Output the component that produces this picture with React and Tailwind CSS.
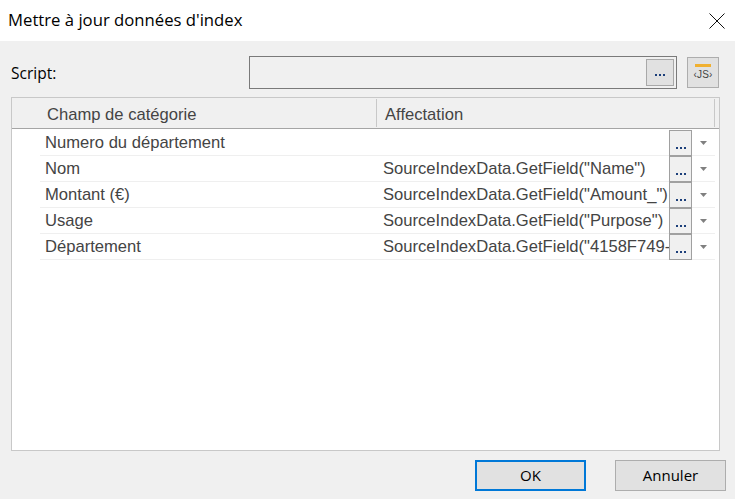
import React from 'react';

const rows = [
  { name: 'Numero du département', value: '' },
  { name: 'Nom', value: 'SourceIndexData.GetField("Name")' },
  { name: 'Montant (€)', value: 'SourceIndexData.GetField("Amount_")' },
  { name: 'Usage', value: 'SourceIndexData.GetField("Purpose")' },
  { name: 'Département', value: 'SourceIndexData.GetField("4158F749-' },
];

function Dots({ className }) {
  return (
    <span className={`flex gap-[2px] ${className}`}>
      <i className="w-[2px] h-[2px] bg-[#1c3f7a]" />
      <i className="w-[2px] h-[2px] bg-[#1c3f7a]" />
      <i className="w-[2px] h-[2px] bg-[#1c3f7a]" />
    </span>
  );
}

function Row({ row }) {
  return (
    <div className="flex h-[26px] ml-[28px] mr-[4px] border-b border-[#efefef] text-[16.6px] text-[#444] font-['Liberation_Sans',sans-serif]">
      <div className="w-[337px] pl-[5px] leading-[26px] shrink-0 whitespace-nowrap">{row.name}</div>
      <div className="w-[292px] pl-[6px] leading-[26px] shrink-0 whitespace-nowrap">{row.value}</div>
      <div className="w-[23px] h-[26px] shrink-0 border border-[#a0a0a0] bg-[#f0f0f0] flex items-end justify-center pb-[6px]">
        <Dots />
      </div>
      <div className="flex-1 flex items-center justify-center">
        <svg width="7" height="4" viewBox="0 0 7 4"><path d="M0 0h7L3.5 4z" fill="#808080" /></svg>
      </div>
    </div>
  );
}

export default function App() {
  return (
    <div className="w-[735px] h-[499px] bg-[#f0f0f0] flex flex-col overflow-hidden font-['Open_Sans',sans-serif] text-black">
      <div className="h-[41px] bg-white flex items-center justify-between pl-[8px] pr-[10px] shrink-0">
        <span className="text-[16.7px] whitespace-nowrap pb-[2px]">Mettre à jour données d'index</span>
        <svg width="16" height="16" viewBox="0 0 16 16"><path d="M0.5 0.5L15.5 15.5M15.5 0.5L0.5 15.5" stroke="#111" strokeWidth="1" fill="none" /></svg>
      </div>

      <div className="h-[33px] mt-[15px] flex items-center pl-[11px] pr-[16px] shrink-0">
        <span className="w-[238px] text-[15.5px] pt-[2px]">Script:</span>
        <div className="w-[428px] h-[33px] border border-[#7a7a7a] bg-[#f0f0f0] flex items-center justify-end pr-[2px]">
          <div className="w-[28px] h-[27px] border-[1.5px] border-[#a8a8a8] bg-[#e1e1e1] flex items-end justify-center pb-[9px]">
            <Dots />
          </div>
        </div>
        <div className="w-[32px] h-[31px] ml-[10px] border border-[#adadad] bg-[#e1e1e1] flex flex-col items-center pt-[6px]">
          <div className="w-[16px] h-[3px] bg-[#f0b030]" />
          <span className="font-['Liberation_Sans',sans-serif] text-[10px] leading-[15px] text-[#444] tracking-[0.2px]">‹JS›</span>
        </div>
      </div>

      <div className="mt-[8px] mx-[11px] w-[709px] h-[354px] border border-[#c8c8c8] bg-white shrink-0">
        <div className="h-[31px] bg-[#f0f0f0] border-b border-[#a5a5a5] flex text-[16.6px] text-[#444] font-['Liberation_Sans',sans-serif]">
          <div className="w-[365px] pl-[35px] border-r border-[#c8c8c8] my-[1px] leading-[32px] overflow-hidden">Champ de catégorie</div>
          <div className="flex-1 pl-[8px] border-r border-[#c8c8c8] mr-[4px] my-[1px] leading-[32px] overflow-hidden">Affectation</div>
        </div>
        <div className="pt-[1px]">
          {rows.map((row) => (
            <Row key={row.name} row={row} />
          ))}
        </div>
      </div>

      <div className="mt-[9px] flex justify-end gap-[29px] pr-[9px] shrink-0">
        <button className="w-[111px] h-[31px] border-[2px] border-[#0078d7] bg-[#e1e1e1] text-[15px]">OK</button>
        <button className="w-[111px] h-[31px] border border-[#adadad] bg-[#e1e1e1] text-[15px]">Annuler</button>
      </div>
    </div>
  );
}
